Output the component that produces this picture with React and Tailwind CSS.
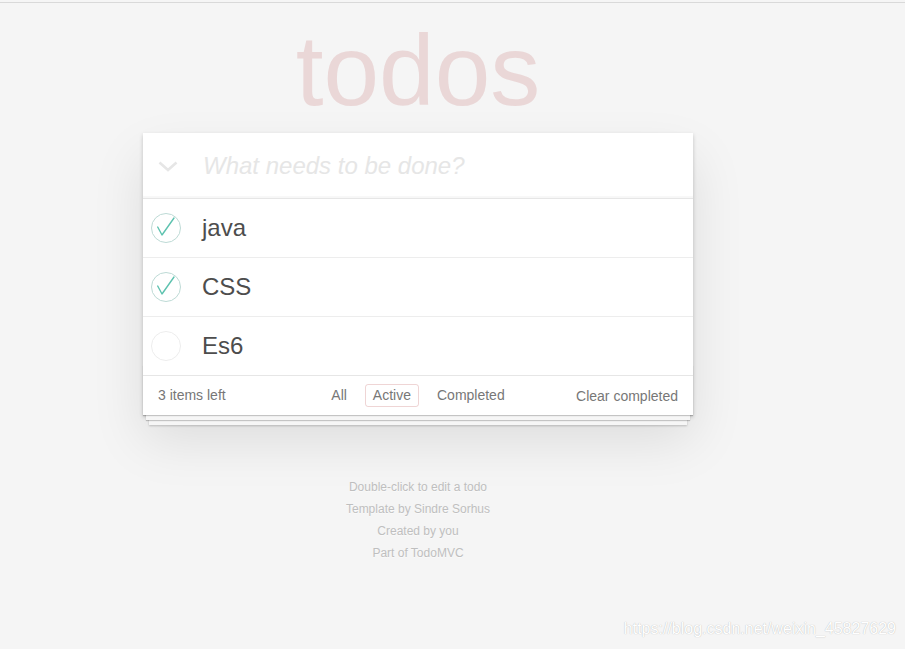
import React from "react";

function Check({ done }) {
  return (
    <svg width="30" height="30" viewBox="0 0 30 30" className="shrink-0">
      <circle cx="15" cy="15" r="14.5" fill="none" stroke={done ? "#bddad5" : "#ededed"} strokeWidth="1" />
      {done && (
        <polyline points="6.7,14 11,22 23,5" fill="none" stroke="#5dc2af" strokeWidth="1.4" strokeLinecap="round" strokeLinejoin="round" />
      )}
    </svg>
  );
}

function Item({ text, done, last }) {
  return (
    <li className={`flex items-center pl-[8px] ${last ? "h-[58px]" : "h-[59px] border-b border-[#ededed]"}`}>
      <Check done={done} />
      <span className="ml-[21px] mb-[1px] text-[24px] leading-[29px] text-[#4d4d4d]">{text}</span>
    </li>
  );
}

export default function App() {
  return (
    <div className="relative min-h-[649px] bg-[#f5f5f5] font-['Liberation_Sans',Arial,sans-serif] overflow-hidden">
      <div className="h-[2px]" />
      <div className="border-t border-[#d9d9d9]" />
      <div className="w-[836px] flex flex-col items-center">
        <h1 className="mt-[17px] h-[100px] text-[100px] leading-[100px] font-thin text-[rgba(175,47,47,0.15)]">todos</h1>
        <section className="mt-[13px] w-[550px] bg-white relative shadow-[0_2px_4px_0_rgba(0,0,0,0.2),0_25px_50px_0_rgba(0,0,0,0.1)]">
          <header className="h-[65px] flex items-center shadow-[inset_0_-2px_1px_rgba(0,0,0,0.03)]">
            <div className="w-[60px] flex justify-start pl-[15px] pt-[2px]">
              <svg width="20" height="11" viewBox="0 0 20 11">
                <polyline points="1.5,1.5 10,9 18.5,1.5" fill="none" stroke="#e6e6e6" strokeWidth="2.6" />
              </svg>
            </div>
            <span className="text-[24px] italic text-[#e6e6e6] leading-[30px]">What needs to be done?</span>
          </header>
          <ul className="border-t border-[#e6e6e6]">
            <Item text="java" done />
            <Item text="CSS" done />
            <Item text="Es6" last />
          </ul>
          <footer className="relative h-[40px] border-t border-[#e6e6e6] px-[15px] pb-[1px] flex items-center text-[14px] text-[#777]">
            <div className="pointer-events-none absolute inset-x-0 bottom-0 h-[50px] overflow-hidden shadow-[0_1px_1px_rgba(0,0,0,0.2),0_8px_0_-3px_#f6f6f6,0_9px_1px_-3px_rgba(0,0,0,0.2),0_16px_0_-6px_#f6f6f6,0_17px_2px_-6px_rgba(0,0,0,0.2)]" />
            <span className="relative">3 items left</span>
            <div className="absolute inset-x-0 top-0 h-full pb-[1px] flex items-center justify-center gap-[10px]">
              <span className="px-[7px] py-[3px] border border-transparent rounded-[3px] leading-[16px]">All</span>
              <span className="px-[7px] py-[3px] border border-[rgba(175,47,47,0.2)] rounded-[3px] leading-[15px]">Active</span>
              <span className="px-[7px] py-[3px] border border-transparent rounded-[3px] leading-[16px]">Completed</span>
            </div>
            <span className="relative ml-auto mt-[2px]">Clear completed</span>
          </footer>
        </section>
        <div className="mt-[61px] flex flex-col items-center text-[12px] text-[#bfbfbf] [text-shadow:0_1px_0_rgba(255,255,255,0.5)]">
          <p className="h-[22px] leading-[22px]">Double-click to edit a todo</p>
          <p className="h-[22px] leading-[22px]">Template by Sindre Sorhus</p>
          <p className="h-[22px] leading-[22px]">Created by you</p>
          <p className="h-[22px] leading-[22px]">Part of TodoMVC</p>
        </div>
      </div>
      <div className="absolute right-[9px] bottom-[8px] text-[16px] text-white [text-shadow:0_0_1px_rgba(0,0,0,0.3)]">
        https://blog.csdn.net/weixin_45827629
      </div>
    </div>
  );
}
